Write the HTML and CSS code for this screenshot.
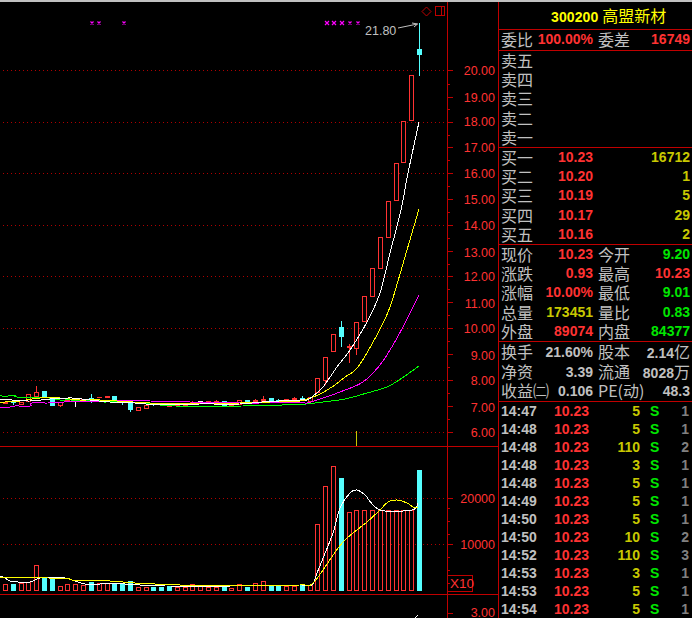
FILE: index.html
```html
<!DOCTYPE html>
<html lang="zh-CN">
<head>
<meta charset="UTF-8">
<title>300200 高盟新材</title>
<link rel="stylesheet" href="styles.css">
</head>
<body>
  <div id="topbar"></div>
  <div id="screen">
    <svg id="chart" xmlns="http://www.w3.org/2000/svg" width="498" height="616" viewBox="0 2 498 616">
      <g id="layer"></g>
      <text class="tag" x="365" y="35">21.80</text>
      <text class="scale" x="495" y="75">20.00</text>
      <text class="scale" x="495" y="102">19.00</text>
      <text class="scale" x="495" y="126">18.00</text>
      <text class="scale" x="495" y="152">17.00</text>
      <text class="scale" x="495" y="178">16.00</text>
      <text class="scale" x="495" y="204">15.00</text>
      <text class="scale" x="495" y="230">14.00</text>
      <text class="scale" x="495" y="257">13.00</text>
      <text class="scale" x="495" y="281">12.00</text>
      <text class="scale" x="495" y="308">11.00</text>
      <text class="scale" x="495" y="333">10.00</text>
      <text class="scale" x="495" y="360">9.00</text>
      <text class="scale" x="495" y="385">8.00</text>
      <text class="scale" x="495" y="412">7.00</text>
      <text class="scale" x="495" y="437">6.00</text>
      <text class="scale" x="495" y="503">20000</text>
      <text class="scale" x="495" y="549">10000</text>
      <text class="scale" x="495" y="617">3.00</text>
      <text class="mark" x="450" y="588">X10</text>
    </svg>

    <div id="panel">
      <div class="title"><span class="code">300200</span> <span class="name">高盟新材</span></div>

      <div class="section ratio">
        <div class="row"><span class="lbl">委比</span><span class="val red">100.00%</span><span class="lbl">委差</span><span class="val red">16749</span></div>
      </div>

      <div class="section book">
        <div class="row"><span class="lbl">卖五</span></div>
        <div class="row"><span class="lbl">卖四</span></div>
        <div class="row"><span class="lbl">卖三</span></div>
        <div class="row"><span class="lbl">卖二</span></div>
        <div class="row"><span class="lbl">卖一</span></div>
      </div>

      <div class="section book">
        <div class="row"><span class="lbl">买一</span><span class="val red">10.23</span><span></span><span class="val olive">16712</span></div>
        <div class="row"><span class="lbl">买二</span><span class="val red">10.20</span><span></span><span class="val olive">1</span></div>
        <div class="row"><span class="lbl">买三</span><span class="val red">10.19</span><span></span><span class="val olive">5</span></div>
        <div class="row"><span class="lbl">买四</span><span class="val red">10.17</span><span></span><span class="val olive">29</span></div>
        <div class="row"><span class="lbl">买五</span><span class="val red">10.16</span><span></span><span class="val olive">2</span></div>
      </div>

      <div class="section book">
        <div class="row"><span class="lbl">现价</span><span class="val red">10.23</span><span class="lbl">今开</span><span class="val green">9.20</span></div>
        <div class="row"><span class="lbl">涨跌</span><span class="val red">0.93</span><span class="lbl">最高</span><span class="val red">10.23</span></div>
        <div class="row"><span class="lbl">涨幅</span><span class="val red">10.00%</span><span class="lbl">最低</span><span class="val green">9.01</span></div>
        <div class="row"><span class="lbl">总量</span><span class="val olive">173451</span><span class="lbl">量比</span><span class="val green">0.83</span></div>
        <div class="row"><span class="lbl">外盘</span><span class="val red">89074</span><span class="lbl">内盘</span><span class="val green">84377</span></div>
      </div>

      <div class="section finance">
        <div class="row"><span class="lbl">换手</span><span class="val">21.60%</span><span class="lbl">股本</span><span class="val">2.14<i>亿</i></span></div>
        <div class="row"><span class="lbl">净资</span><span class="val">3.39</span><span class="lbl">流通</span><span class="val">8028<i>万</i></span></div>
        <div class="row"><span class="lbl">收益㈡</span><span class="val">0.106</span><span class="lbl">PE(动)</span><span class="val">48.3</span></div>
      </div>

      <div class="ticks">
        <div class="tick"><span>14:47</span><span class="red">10.23</span><span class="vol">5</span><span class="green">S</span><span class="cnt">1</span></div>
        <div class="tick"><span>14:48</span><span class="red">10.23</span><span class="vol">5</span><span class="green">S</span><span class="cnt">1</span></div>
        <div class="tick"><span>14:48</span><span class="red">10.23</span><span class="vol">110</span><span class="green">S</span><span class="cnt">2</span></div>
        <div class="tick"><span>14:48</span><span class="red">10.23</span><span class="vol">3</span><span class="green">S</span><span class="cnt">1</span></div>
        <div class="tick"><span>14:48</span><span class="red">10.23</span><span class="vol">5</span><span class="green">S</span><span class="cnt">1</span></div>
        <div class="tick"><span>14:49</span><span class="red">10.23</span><span class="vol">5</span><span class="green">S</span><span class="cnt">1</span></div>
        <div class="tick"><span>14:50</span><span class="red">10.23</span><span class="vol">5</span><span class="green">S</span><span class="cnt">1</span></div>
        <div class="tick"><span>14:50</span><span class="red">10.23</span><span class="vol">10</span><span class="green">S</span><span class="cnt">2</span></div>
        <div class="tick"><span>14:52</span><span class="red">10.23</span><span class="vol">110</span><span class="green">S</span><span class="cnt">3</span></div>
        <div class="tick"><span>14:53</span><span class="red">10.23</span><span class="vol">3</span><span class="green">S</span><span class="cnt">1</span></div>
        <div class="tick"><span>14:53</span><span class="red">10.23</span><span class="vol">5</span><span class="green">S</span><span class="cnt">1</span></div>
        <div class="tick"><span>14:54</span><span class="red">10.23</span><span class="vol">5</span><span class="green">S</span><span class="cnt">1</span></div>
      </div>
    </div>
  </div>
  <script src="chart.js"></script>
</body>
</html>
```

FILE: styles.css
```css
html, body {
    margin: 0;
    height: 100%;
    background: #000;
    overflow: hidden;
}
#topbar {
    height: 2px;
    background: #c0c0c0;
}
#screen {
    display: flex;
    height: 616px;
}
#chart {
    display: block;
    flex: none;
}
#chart .scale {
    font: 12.5px "Liberation Sans", sans-serif;
    fill: #ff3232;
    text-anchor: end;
}
#chart .mark {
    font: 13.5px "Liberation Sans", sans-serif;
    fill: #ff3232;
}
#chart .tag {
    font: 12.5px "Liberation Sans", sans-serif;
    fill: #c0c0c0;
}
#panel {
    width: 193px;
    border-left: 1px solid #c00000;
    font: bold 14px "Liberation Sans", "Noto Sans CJK SC", sans-serif;
    color: #c0c0c0;
}
.title {
    height: 27px;
    line-height: 27px;
    padding-left: 52px;
    color: #ffff00;
    border-bottom: 1px solid #c00000;
    white-space: nowrap;
}
.title .code {
    letter-spacing: 0.1px;
}
.title .name {
    font: 400 16px/27px "Noto Sans CJK SC", sans-serif;
}
.section {
    border-bottom: 1px solid #c00000;
}
.ratio {
    height: 20px;
}
.book {
    height: 96px;
}
.finance {
    height: 59px;
}
.row {
    display: grid;
    grid-template-columns: 32px 60px 37px 60px;
    height: 19.2px;
    line-height: 19px;
    padding-left: 2px;
    white-space: nowrap;
}
.finance .row {
    height: 19.6px;
    line-height: 20px;
}
.lbl {
    font: 400 16px/19px "Noto Sans CJK SC", sans-serif;
}
.val {
    text-align: right;
}
.row > .lbl:nth-child(3) {
    margin-left: 5px;
}
.val i {
    font: 400 16px/19px "Noto Sans CJK SC", sans-serif;
}
.red {
    color: #ff3232;
}
.olive {
    color: #c8c800;
}
.green {
    color: #00e600;
}
.tick {
    display: grid;
    grid-template-columns: 53px 35px 51px 10px 8px 31px;
    height: 18px;
    line-height: 18px;
    padding-left: 2px;
}
.tick .vol {
    grid-column: 3;
    text-align: right;
    color: #c8c800;
}
.tick .green {
    grid-column: 5;
    color: #00e600;
}
.tick .cnt {
    grid-column: 6;
    text-align: right;
    color: #808080;
}
```

FILE: chart.js
```js
// price chart + volume chart, coordinates are screen pixels
const layer = document.getElementById('layer');
const RED = '#ff3232', AXIS = '#c00000', CYAN = '#55ffff';

function add(name, attrs) {
    const el = document.createElementNS('http://www.w3.org/2000/svg', name);
    for (const key in attrs) el.setAttribute(key, attrs[key]);
    layer.appendChild(el);
    return el;
}

function line(x1, y1, x2, y2, color) {
    add('line', { x1, y1, x2, y2, stroke: color, 'shape-rendering': 'crispEdges' });
}

// catmull-rom through the sampled points, aliased like the original
function curve(points, color) {
    const p = points.split(' ').map(s => s.split(',').map(Number));
    let d = `M${p[0][0]} ${p[0][1]}`;
    for (let i = 0; i < p.length - 1; i++) {
        const a = p[i - 1] || p[i], b = p[i], c = p[i + 1], e = p[i + 2] || c;
        const c1 = [b[0] + (c[0] - a[0]) / 6, b[1] + (c[1] - a[1]) / 6];
        const c2 = [c[0] - (e[0] - b[0]) / 6, c[1] - (e[1] - b[1]) / 6];
        d += `C${c1[0]} ${c1[1]} ${c2[0]} ${c2[1]} ${c[0]} ${c[1]}`;
    }
    add('path', { d, fill: 'none', stroke: color, 'stroke-width': 1, 'shape-rendering': 'crispEdges' });
}

function slotLeft(i) {
    return Math.round(5.5 + 7.81 * i - 2.5);
}

function bar(i, top, bottom, kind) {
    const x = slotLeft(i);
    if (kind === 'c' || kind === 'f') {
        add('rect', { x, y: top, width: 5, height: bottom - top, fill: kind === 'c' ? CYAN : RED, 'shape-rendering': 'crispEdges' });
    } else {
        add('rect', { x: x + 0.5, y: top + 0.5, width: 4, height: bottom - top - 1, fill: '#000', stroke: RED, 'shape-rendering': 'crispEdges' });
    }
}

// grid
[70, 122, 173, 225, 276, 328, 380, 432, 498, 544].forEach(y => {
    add('line', { x1: 3, y1: y + 0.5, x2: 447, y2: y + 0.5, stroke: '#b00000', 'stroke-dasharray': '1 3', 'shape-rendering': 'crispEdges' });
});

// axes
line(447.5, 2, 447.5, 618, AXIS);
line(0, 446.5, 498, 446.5, AXIS);
line(0, 594.5, 498, 594.5, AXIS);

[70, 97, 122, 147, 173, 199, 225, 251, 276, 302, 328, 354, 380, 406, 432, 498, 544, 613].forEach(y => {
    line(448, y + 0.5, 453, y + 0.5, AXIS);
});
[84, 109, 135, 160, 186, 212, 238, 264, 289, 315, 341, 367, 393, 419, 508, 521, 534, 557, 570, 583].forEach(y => {
    line(448, y + 0.5, 450, y + 0.5, AXIS);
});

// X10 box
add('rect', { x: 447.5, y: 575.5, width: 25, height: 16, fill: 'none', stroke: AXIS, 'shape-rendering': 'crispEdges' });

// candles: index, kind, body top, body bottom, wick top, wick bottom
const candles = [
    [0, 'r', 402, 404], [1, 'c', 401, 403, 401, 405], [2, 'r', 402, 405], [3, 'r', 394, 402],
    [4, 'r', 392, 397, 386, 397], [5, 'c', 391, 398], [6, 'c', 399, 406, 397, 406], [7, 'r', 402, 406, 402, 407],
    [8, 'r', 399, 401, 398, 401], [9, 'w', 398, 399, 398, 407], [10, 'r', 399, 401], [11, 'c', 398, 400, 394, 403],
    [12, 'f', 397, 398], [13, 'f', 396, 398], [14, 'c', 396, 401], [15, 'c', 401, 402, 400, 405],
    [16, 'c', 403, 410, 403, 412], [17, 'r', 407, 411], [18, 'r', 405, 409, 403, 409], [19, 'c', 403, 404, 403, 406],
    [20, 'w', 404, 405], [21, 'r', 405, 407], [22, 'r', 404, 406], [23, 'r', 405, 407],
    [24, 'r', 402, 404, 401, 404], [25, 'w', 401, 403], [26, 'f', 401, 403], [27, 'r', 401, 403, 400, 403],
    [28, 'c', 401, 406], [29, 'f', 403, 406], [30, 'r', 400, 405], [31, 'c', 400, 403],
    [32, 'r', 400, 402, 399, 402], [33, 'f', 399, 402, 396, 402], [34, 'c', 398, 402], [35, 'c', 400, 402, 399, 402],
    [36, 'r', 399, 401], [37, 'r', 398, 400, 397, 400], [38, 'c', 398, 401, 396, 401], [39, 'r', 397, 402],
    [40, 'r', 378, 393], [41, 'r', 357, 381, 357, 385], [42, 'r', 334, 352], [43, 'c', 327, 337, 321, 347],
    [44, 'f', 346, 348, 344, 363], [45, 'r', 322, 349, 322, 355], [46, 'r', 296, 322], [47, 'r', 268, 297],
    [48, 'r', 237, 269], [49, 'r', 201, 238], [50, 'r', 163, 201], [51, 'r', 121, 163],
    [52, 'r', 75, 121], [53, 'c', 49, 55, 23, 76]
];

candles.forEach(([i, kind, top, bottom, wickTop, wickBottom]) => {
    const x = slotLeft(i);
    const color = kind === 'c' ? CYAN : kind === 'w' ? '#fff' : RED;
    if (wickTop !== undefined) line(x + 2.5, wickTop, x + 2.5, wickBottom, color);
    if (kind === 'w') {
        line(x, top + 0.5, x + 5, top + 0.5, color);
    } else {
        bar(i, top, bottom, kind);
    }
});

// moving averages on the price chart
curve('0,395 2,396 16,396 17,397 49,398 60,400 70,400 100,401 103,402 118,402 150,404 175,406 243,406 282,405 306,404 323,402 345,399 367,393 387,387 402,378 419,366', '#00ff00');
curve('0,408 10,407 15,406 30,406 32,403 48,403 64,402 100,401 130,401 150,401 190,402 240,403 260,403 300,402 307,403 323,398 340,392 363,382 380,365 393,345 405,323 419,295', '#ff00ff');
curve('0,402 5,402 20,401 40,398 60,398 80,400 100,400 150,403 190,404 240,403 270,402 300,401 307,399 318,395 332,387 345,377 358,367 378,333 390,307 407,250 419,209', '#ffff00');
curve('0,399 12,400 30,401 50,399 72,398 90,400 110,402 135,403 160,405 200,404 240,404 262,402 300,400 307,400 313,396 323,387 337,367 350,350 367,322 380,293 390,253 401,210 408,173 419,122', '#ffffff');

// volume bars
const tops = [584, 584, 583, 582, 565, 578, 579, 586, 584, 584, 585, 582, 583, 583, 583, 583, 581, 587, 587, 587,
    587, 586, 587, 587, 584, 586, 587, 587, 587, 588, 584, 587, 583, 581, 586, 586, 586, 586, 584, 585,
    524, 486, 466, 478, 512, 510, 510, 510, 510, 510, 510, 510, 510, 470];
const cyanBars = [1, 5, 6, 11, 14, 15, 16, 19, 20, 21, 28, 31, 34, 35, 38, 43, 53];
tops.forEach((top, i) => bar(i, top, 591, cyanBars.includes(i) ? 'c' : 'r'));

// volume averages
curve('0,576 5,578 10,581 18,582 30,582 40,578 55,577 65,578 72,580 85,584 100,584 125,584 140,585 165,586 230,586 300,585 312,585 317,573 333,533 340,508 350,493 357,490 365,495 380,510 412,510 418,503', '#ffffff');
curve('0,578 48,578 70,579 72,580 110,581 135,583 180,585 230,586 300,585 312,584 323,570 343,542 367,522 380,510 388,502 397,500 407,503 413,507 418,507', '#ffff00');

// third panel start
line(417.5, 615, 415.5, 618, '#fff');

// signal tick
line(356.5, 431, 356.5, 446, '#c8c800');

// markers along the top
[92, 99, 124, 327, 334, 342, 350, 358].forEach((x, n) => {
    const d = n >= 3 && n <= 5 ? 2 : 1.5;
    add('path', { d: `M${x - d} ${23 - d}L${x + d} ${23 + d}M${x + d} ${23 - d}L${x - d} ${23 + d}`, stroke: '#ff00ff', 'stroke-width': 1.2 });
});

// diamond and window box
add('path', { d: 'M426.5 7L431 11.5L426.5 16L422 11.5Z', fill: 'none', stroke: '#c00000' });
add('rect', { x: 435.5, y: 6.5, width: 9, height: 9, fill: 'none', stroke: '#c00000', 'shape-rendering': 'crispEdges' });
line(441.5, 6, 441.5, 16, '#c00000');

// arrow to the high
add('path', { d: 'M398 28L417.5 24M412 23L417.5 24L414 27', fill: 'none', stroke: '#c0c0c0' });
```
